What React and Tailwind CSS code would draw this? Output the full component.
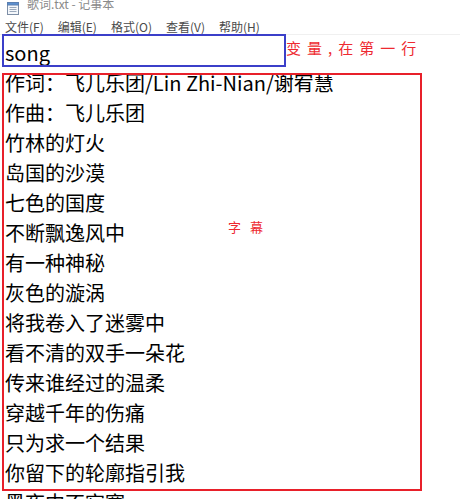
import React from 'react';

const lines = [
    'song',
    '作词：飞儿乐团/Lin Zhi-Nian/谢宥慧',
    '作曲：飞儿乐团',
    '竹林的灯火',
    '岛国的沙漠',
    '七色的国度',
    '不断飘逸风中',
    '有一种神秘',
    '灰色的漩涡',
    '将我卷入了迷雾中',
    '看不清的双手一朵花',
    '传来谁经过的温柔',
    '穿越千年的伤痛',
    '只为求一个结果',
    '你留下的轮廓指引我',
    '黑夜中不寂寞',
];

const menus = ['文件(F)', '编辑(E)', '格式(O)', '查看(V)', '帮助(H)'];

const NotepadIcon = () => (
    <svg width="14" height="14" viewBox="0 0 14 14" className="shrink-0">
        <rect x="1.5" y="1.5" width="11" height="12" fill="#f4f7fb" stroke="#7d8ea6" />
        <rect x="1.5" y="1.5" width="11" height="2.5" fill="#5b8fd0" stroke="#5b7fb0" />
        <line x1="3.5" y1="6.5" x2="10.5" y2="6.5" stroke="#9aa8bb" />
        <line x1="3.5" y1="8.5" x2="10.5" y2="8.5" stroke="#9aa8bb" />
        <line x1="3.5" y1="10.5" x2="10.5" y2="10.5" stroke="#9aa8bb" />
    </svg>
);

const App = () => {
    return (
        <div
            className="relative w-[460px] h-[499px] overflow-hidden bg-white"
            style={{ fontFamily: '"Noto Sans CJK SC", "Noto Sans", sans-serif' }}
        >
            {/* title bar, cut off at top */}
            <div className="h-[12px] flex items-end pl-[6px] gap-[7px]">
                <div className="-mb-[3px]">
                    <NotepadIcon />
                </div>
                <span className="text-[12px] leading-[18px] text-[#8a8a8a] -mb-[1px]">歌词.txt - 记事本</span>
            </div>

            {/* menu bar */}
            <div className="h-[23px] pt-[6px] pl-[5px] flex gap-[14px] text-[12px] leading-[17px] text-[#4a4a4a] border-b border-[#f0f0f0]">
                {menus.map((m) => (
                    <span key={m}>{m}</span>
                ))}
            </div>

            {/* text area */}
            <div className="pt-[3px] pl-[5px] text-[20px] leading-[30px] text-black whitespace-nowrap">
                {lines.map((line, i) => (
                    <div key={i}>{line}</div>
                ))}
            </div>

            {/* annotation boxes */}
            <div className="absolute left-[2px] top-[34px] w-[284px] h-[33px] border-2 border-[#3b3fc9]" />
            <div className="absolute left-[2px] top-[73px] w-[420px] h-[418px] border-2 border-[#e8202a]" />

            <div className="absolute left-[286px] top-[37px] text-[15px] leading-[22px] tracking-[6px] text-[#ee2a30]">
                变量,在第一行
            </div>
            <div className="absolute left-[228px] top-[217px] text-[13px] leading-[20px] tracking-[9px] text-[#ee2a30]">
                字幕
            </div>
        </div>
    );
};

export default App;
